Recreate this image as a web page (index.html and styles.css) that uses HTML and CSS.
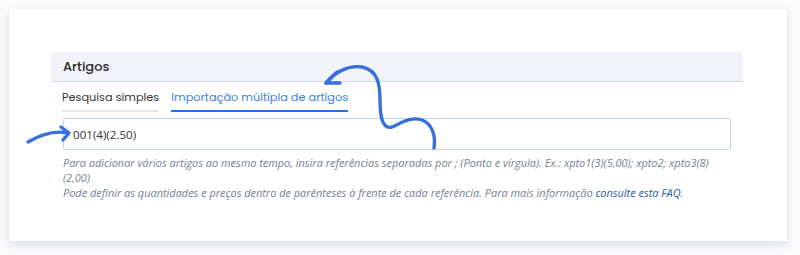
FILE: index.html
```html
<!DOCTYPE html>
<html lang="pt">
<head>
<meta charset="utf-8">
<link rel="stylesheet" href="styles.css">
</head>
<body>
<div class="card">
  <div class="panel">
    <div class="panel-head">Artigos</div>
    <div class="tabs">
      <div class="tab">Pesquisa simples</div>
      <div class="tab active">Importação múltipla de artigos</div>
    </div>
    <div class="body">
      <div class="input">001(4)(2.50)</div>
      <p class="help">Para adicionar vários artigos ao mesmo tempo, insira referências separadas por ; (Ponto e vírgula). Ex.: xpto1(3)(5,00); xpto2; xpto3(8) (2,00)<br>Pode definir as quantidades e preços dentro de parênteses à frente de cada referência. Para mais informação <a href="#">consulte esta FAQ</a>.</p>
    </div>
  </div>
</div>
<svg class="arrows" width="800" height="255" viewBox="0 0 800 255">
  <g fill="none" stroke="#3570dc" stroke-width="3.4" stroke-linecap="round" stroke-linejoin="round">
    <path d="M28,142 C40,135 54,130 68,133"/>
    <path d="M61,127 L69,133 L63,140"/>
    <path d="M434,148 C436,135 432,124 422,120 C410,116 400,124 392,127 C382,130 380,115 380,100 C380,85 378,70 362,67 C348,65 335,72 326,83"/>
    <path d="M337,72 L326,83 L340,83"/>
  </g>
</svg>
</body>
</html>
```
FILE: styles.css
```css
html, body {
  margin: 0;
  padding: 0;
}
body {
  width: 800px;
  height: 255px;
  background: #fbfbfc;
  position: relative;
  overflow: hidden;
  font-family: "Open Sans", "Liberation Sans", sans-serif;
}
.card {
  position: absolute;
  left: 9px;
  top: 9px;
  width: 778px;
  height: 232px;
  background: #fff;
  box-shadow: 0 4px 10px rgba(160, 175, 200, 0.35), 0 0 3px rgba(0,0,0,0.05);
  box-sizing: border-box;
  padding: 43px 44px 0 42px;
}
.panel {
  display: flex;
  flex-direction: column;
}
.panel-head {
  height: 29px;
  background: #f2f3f8;
  border-bottom: 1px solid #cfd8ea;
  font-family: "Poppins", "Inter", sans-serif;
  font-size: 13px;
  font-weight: 500;
  color: #2a2a2a;
  display: flex;
  align-items: center;
  padding-left: 12px;
}
.tabs {
  display: flex;
  gap: 12px;
  padding-left: 11px;
  margin-top: 8px;
}
.tab {
  font-family: "Poppins", "Inter", sans-serif;
  font-size: 11.3px;
  color: #333;
  padding: 0 0 5px 0;
  line-height: 15px;
  border-bottom: 2px solid #e6e6e6;
}
.tab.active {
  color: #3b80e8;
  border-bottom: 2px solid #1a73e8;
}
.body {
  padding: 6px 12px 0 12px;
}
.input {
  height: 30px;
  border: 1px solid #c5d1e6;
  border-radius: 2px;
  font-size: 11.6px;
  color: #333;
  display: flex;
  align-items: center;
  padding-left: 9px;
}
.help {
  margin: 5px 0 0 0;
  font-style: italic;
  font-size: 10.95px;
  line-height: 15px;
  color: #77808f;
}
.help a {
  color: #2659a8;
  text-decoration: none;
}
.arrows {
  position: absolute;
  left: 0;
  top: 0;
  pointer-events: none;
}
```
